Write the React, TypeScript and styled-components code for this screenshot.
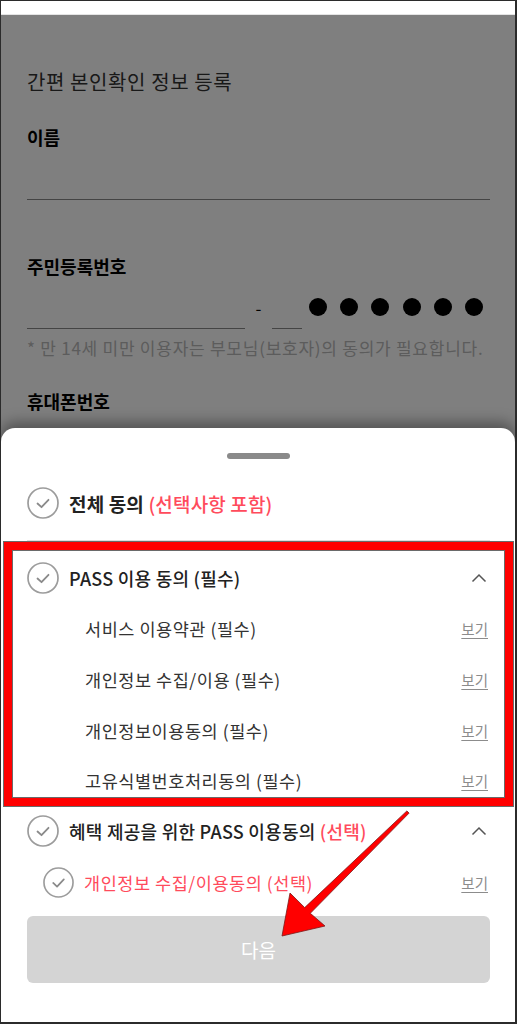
import styled, { createGlobalStyle } from 'styled-components';

const GlobalStyle = createGlobalStyle`
    html, body {
        margin: 0;
        padding: 0;
        background: #ffffff;
    }
    body {
        font-family: "Noto Sans CJK KR", "Noto Sans", sans-serif;
    }
    * {
        box-sizing: border-box;
    }
`;

const Frame = styled.div`
    position: relative;
    width: 517px;
    height: 1024px;
    overflow: hidden;
    background: #ffffff;
    border-style: solid;
    border-color: #2b2b2b;
    border-width: 1px 2px 2px 1px;
    display: flex;
    flex-direction: column;
`;

const StatusStrip = styled.div`
    height: 14px;
    flex: none;
    background: #ffffff;
    border-bottom: 1px solid #e4e4e4;
`;

const Screen = styled.div`
    position: relative;
    flex: 1;
`;

const Page = styled.div`
    display: flex;
    flex-direction: column;
    padding: 0 25px 0 26px;
`;

const PageTitle = styled.h1`
    margin: 53px 0 0;
    font-size: 20px;
    line-height: 28px;
    letter-spacing: 0.6px;
    font-weight: 400;
    color: #333333;
`;

const FieldLabel = styled.div<{ $gap: number }>`
    margin-top: ${(p) => p.$gap}px;
    font-size: 18px;
    line-height: 24px;
    font-weight: 700;
    color: #000000;
`;

const LineInput = styled.div<{ $width?: number }>`
    height: 51px;
    width: ${(p) => (p.$width ? `${p.$width}px` : '100%')};
    flex: none;
    border-bottom: 1px solid #888888;
`;

const IdRow = styled.div`
    display: flex;
    align-items: flex-end;
    height: 51px;
`;

const Dash = styled.span`
    width: 27px;
    text-align: center;
    margin-bottom: 8px;
    font-size: 17px;
    line-height: 26px;
    color: #000000;
    flex: none;
`;

const Dots = styled.div`
    flex: 1;
    display: flex;
    justify-content: space-between;
    padding: 0 7px 13px 7px;
`;

const Dot = styled.span`
    width: 18px;
    height: 18px;
    border-radius: 50%;
    background: #000000;
`;

const Helper = styled.div`
    margin-top: 7px;
    font-size: 17px;
    line-height: 24px;
    letter-spacing: 0.75px;
    color: #b8b8b8;
    white-space: nowrap;
`;

const Dim = styled.div`
    position: absolute;
    inset: 0;
    background: rgba(0, 0, 0, 0.5);
`;

const Sheet = styled.div`
    position: absolute;
    left: 0;
    right: 0;
    bottom: 0;
    background: #ffffff;
    border-radius: 14px 14px 0 0;
    box-shadow: 0 -6px 14px rgba(0, 0, 0, 0.35);
    padding: 25px 25px 39px 26px;
    display: flex;
    flex-direction: column;
`;

const Handle = styled.div`
    width: 63px;
    height: 6px;
    border-radius: 3px;
    background: #8a8a8a;
    align-self: center;
`;

const AllRow = styled.div`
    margin-top: 24px;
    height: 40px;
    display: flex;
    align-items: center;
    gap: 10px;
`;

const AllText = styled.span`
    font-size: 19px;
    letter-spacing: 0.15px;
    font-weight: 700;
    color: #222222;
`;

const Red = styled.span<{ $weight?: number }>`
    color: #ff4b5c;
    font-weight: ${(p) => p.$weight ?? 500};
`;

const Divider = styled.div`
    margin-top: 17px;
    height: 1px;
    background: #dddddd;
`;

const List = styled.div`
    margin-top: 11.6px;
    display: flex;
    flex-direction: column;
`;

const Row = styled.div<{ $indent?: number }>`
    height: 50.7px;
    display: flex;
    align-items: center;
    gap: 10px;
    padding-left: ${(p) => p.$indent ?? 0}px;
`;

const GroupTitle = styled.span`
    flex: 1;
    font-size: 18px;
    letter-spacing: 0.25px;
    font-weight: 500;
    color: #222222;
`;

const ItemText = styled.span<{ $red?: boolean }>`
    flex: 1;
    font-size: 17.5px;
    letter-spacing: 0.55px;
    font-weight: 400;
    color: ${(p) => (p.$red ? '#ff4b5c' : '#333333')};
`;

const ViewLink = styled.a`
    margin-right: 2px;
    font-size: 14.5px;
    color: #8c8c8c;
    text-decoration: underline;
    text-underline-offset: 3px;
`;

const Chevron = styled.svg`
    margin-right: 3px;
    flex: none;
`;

const NextButton = styled.button`
    margin-top: 8.5px;
    height: 67px;
    border: none;
    border-radius: 6px;
    background: #d4d4d4;
    color: #ffffff;
    font-family: inherit;
    font-size: 19px;
    font-weight: 400;
`;

const Highlight = styled.div`
    position: absolute;
    left: 3px;
    top: 541px;
    width: 509px;
    height: 264px;
    border: 8px solid #ff0000;
    outline: 1px solid #6a6a6a;
    box-shadow: inset 0 0 0 1px #6a6a6a;
    pointer-events: none;
`;

const ArrowLayer = styled.svg`
    position: absolute;
    left: 0;
    top: 0;
    pointer-events: none;
`;

const CheckCircle = ({ size = 32 }: { size?: number }) => (
    <svg width={size} height={size} viewBox="0 0 32 32" style={{ flex: 'none' }}>
        <circle cx="16" cy="16" r="15" fill="none" stroke="#9c9c9c" strokeWidth="1.7" />
        <path d="M10.5 16.5 L14.5 20.2 L21.5 12.8" fill="none" stroke="#8a8a8a" strokeWidth="1.8" strokeLinecap="round" strokeLinejoin="round" />
    </svg>
);

const ChevronUp = () => (
    <Chevron width="16" height="10" viewBox="0 0 16 10">
        <polyline points="1.5,8.5 8,2 14.5,8.5" fill="none" stroke="#555555" strokeWidth="1.5" />
    </Chevron>
);

const requiredItems = [
    '서비스 이용약관 (필수)',
    '개인정보 수집/이용 (필수)',
    '개인정보이용동의 (필수)',
    '고유식별번호처리동의 (필수)',
];

export default function App() {
    return (
        <>
            <GlobalStyle />
            <Frame>
                <StatusStrip />
                <Screen>
                    <Page>
                        <PageTitle>간편 본인확인 정보 등록</PageTitle>
                        <FieldLabel $gap={29}>이름</FieldLabel>
                        <LineInput />
                        <FieldLabel $gap={54}>주민등록번호</FieldLabel>
                        <IdRow>
                            <LineInput $width={218} />
                            <Dash>-</Dash>
                            <LineInput $width={30} />
                            <Dots>
                                {[0, 1, 2, 3, 4, 5].map((i) => (
                                    <Dot key={i} />
                                ))}
                            </Dots>
                        </IdRow>
                        <Helper>* 만 14세 미만 이용자는 부모님(보호자)의 동의가 필요합니다.</Helper>
                        <FieldLabel $gap={29}>휴대폰번호</FieldLabel>
                    </Page>
                    <Dim />
                </Screen>

                <Sheet>
                    <Handle />
                    <AllRow>
                        <CheckCircle />
                        <AllText>
                            전체 동의 <Red>(선택사항 포함)</Red>
                        </AllText>
                    </AllRow>
                    <Divider />
                    <List>
                        <Row>
                            <CheckCircle />
                            <GroupTitle>PASS 이용 동의 (필수)</GroupTitle>
                            <ChevronUp />
                        </Row>
                        {requiredItems.map((item) => (
                            <Row key={item} $indent={58}>
                                <ItemText>{item}</ItemText>
                                <ViewLink>보기</ViewLink>
                            </Row>
                        ))}
                        <Row>
                            <CheckCircle />
                            <GroupTitle>
                                혜택 제공을 위한 PASS 이용동의 <Red>(선택)</Red>
                            </GroupTitle>
                            <ChevronUp />
                        </Row>
                        <Row $indent={16}>
                            <CheckCircle size={31} />
                            <ItemText $red>개인정보 수집/이용동의 (선택)</ItemText>
                            <ViewLink>보기</ViewLink>
                        </Row>
                    </List>
                    <NextButton>다음</NextButton>
                </Sheet>

                <Highlight />
                <ArrowLayer width="514" height="1021" viewBox="1 1 514 1021">
                    <polygon
                        points="406.9,810.9 304.7,907.6 290,893 282,936 325,926 310.3,913.3 409.1,813.1"
                        fill="#ff0000"
                        stroke="#7a1a1a"
                        strokeWidth="0.8"
                        strokeLinejoin="miter"
                    />
                </ArrowLayer>
            </Frame>
        </>
    );
}
